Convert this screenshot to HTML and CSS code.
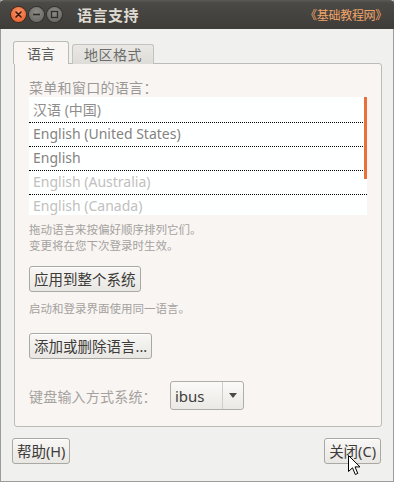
FILE: index.html
```html
<!DOCTYPE html>
<html lang="zh">
<head>
<meta charset="utf-8">
<title>语言支持</title>
<link rel="stylesheet" href="styles.css">
</head>
<body>
<div class="window">
  <div class="titlebar">
    <div class="wbtns">
      <span class="wb wb-close"><svg width="15" height="15" viewBox="0 0 15 15"><path d="M5 5 L10 10 M10 5 L5 10" stroke="#3a1a0e" stroke-width="1.6" stroke-linecap="round"/></svg></span>
      <span class="wb wb-gray"><svg width="15" height="15" viewBox="0 0 15 15"><path d="M4 7.5 H11" stroke="#2e2d2a" stroke-width="1.6"/></svg></span>
      <span class="wb wb-gray"><svg width="15" height="15" viewBox="0 0 15 15"><rect x="4.5" y="4.5" width="6" height="6" fill="none" stroke="#2e2d2a" stroke-width="1.3"/></svg></span>
    </div>
    <div class="title">语言支持</div>
    <div class="brand">《基础教程网》</div>
  </div>
  <div class="body">
    <div class="tabs">
      <div class="tab tab-active">语言</div>
      <div class="tab">地区格式</div>
    </div>
    <div class="panel">
      <div class="label">菜单和窗口的语言：</div>
      <div class="list">
        <div class="row row-mid">汉语 (中国)</div>
        <div class="row row-dark">English (United States)</div>
        <div class="row row-dark">English</div>
        <div class="row row-light">English (Australia)</div>
        <div class="row row-light row-last">English (Canada)</div>
        <div class="scroll"></div>
      </div>
      <div class="hint hint-first">拖动语言来按偏好顺序排列它们。<br>变更将在您下次登录时生效。</div>
      <div class="btnline btnline-1"><button class="btn">应用到整个系统</button></div>
      <div class="hint hint-second">启动和登录界面使用同一语言。</div>
      <div class="btnline btnline-2"><button class="btn">添加或删除语言...</button></div>
      <div class="kbd">
        <span class="kbd-label">键盘输入方式系统：</span>
        <div class="combo">
          <span class="combo-text">ibus</span>
          <span class="combo-sep"></span>
          <span class="combo-arrow"><svg width="8" height="5" viewBox="0 0 8 5"><path d="M0 0 H8 L4 5 Z" fill="#4a4a48"/></svg></span>
        </div>
      </div>
    </div>
    <div class="footer">
      <button class="btn btn-foot">帮助(H)</button>
      <button class="btn btn-foot">关闭(C)</button>
    </div>
  </div>
  <svg class="cursor" width="14" height="22" viewBox="0 0 14 22"><path d="M0.5 0.5 L0.5 16.5 L4.5 12.8 L7.3 19.5 L9.8 18.4 L7 11.9 L12 11.9 Z" fill="#ffffff" stroke="#000000" stroke-width="1" stroke-linejoin="round"/></svg>
</div>
</body>
</html>
```

FILE: styles.css
```css
* { box-sizing: border-box; }
html, body { margin: 0; padding: 0; }
body {
  width: 394px;
  height: 482px;
  overflow: hidden;
  background: #f0f0ee;
  font-family: "Noto Sans", "Noto Sans CJK SC", sans-serif;
}
.window {
  position: relative;
  width: 394px;
  height: 482px;
  background: #f0f0ee;
  border-left: 1px solid #9c9c9a;
  border-right: 1px solid #9c9c9a;
  border-bottom: 1px solid #9c9c9a;
  display: flex;
  flex-direction: column;
}
.titlebar {
  height: 29px;
  flex: none;
  background: linear-gradient(#5b5a55 0px, #4a4945 3px, #3d3c38 100%);
  border-radius: 4px 4px 0 0;
  display: flex;
  align-items: center;
  padding-left: 11px;
  padding-right: 7px;
  margin-left: -1px;
  margin-right: -1px;
}
.wbtns { display: flex; gap: 3px; }
.wb {
  width: 15px;
  height: 15px;
  border-radius: 50%;
  display: flex;
}
.wb-close {
  background: radial-gradient(circle at 50% 35%, #f79466, #ef6f3f 60%, #d85a2c);
  box-shadow: 0 0 0 1px #4a2a1a;
}
.wb-gray {
  background: radial-gradient(circle at 50% 35%, #8d8c86, #6e6d68 70%);
  box-shadow: 0 0 0 1px #33322f;
}
.title {
  margin-left: 15px;
  color: #dfdbd2;
  font-weight: bold;
  font-size: 15px;
  letter-spacing: 0.5px;
  font-family: "Noto Sans CJK SC", sans-serif;
}
.brand {
  margin-left: auto;
  color: #f2a468;
  font-size: 12px;
  letter-spacing: -0.3px;
  font-family: "Noto Sans CJK SC", sans-serif;
}
.body {
  flex: 1;
  padding: 13px 12px 0 12px;
  display: flex;
  flex-direction: column;
}
.tabs {
  display: flex;
  align-items: flex-end;
  gap: 3px;
  height: 22px;
  margin-bottom: -1px;
  position: relative;
  z-index: 1;
}
.tab {
  font-family: "Noto Sans CJK SC", sans-serif;
  font-size: 14px;
  color: #6c6c6a;
  letter-spacing: 0.5px;
  height: 20px;
  line-height: 19px;
  padding: 0 11px 0 11px;
  border: 1px solid #c4c2bf;
  border-bottom: none;
  border-radius: 3px 3px 0 0;
  background: linear-gradient(#e9e8e5, #dedcd8);
}
.tab-active {
  height: 23px;
  line-height: 22px;
  background: #f9f5f2;
  color: #5c5c5a;
  border-color: #bdbbb8;
  letter-spacing: 0;
  padding: 0 13px 0 13px;
}
.panel {
  margin-left: 1px;
  width: 368px;
  height: 364px;
  flex: none;
  background: #f9f5f2;
  border: 1px solid #bdbbb8;
  border-radius: 0 3px 3px 3px;
  padding: 14px 14px 0 14px;
  display: flex;
  flex-direction: column;
  align-items: flex-start;
}
.label {
  font-family: "Noto Sans CJK SC", sans-serif;
  font-size: 14px;
  line-height: 19px;
  color: #9a9896;
  letter-spacing: 0.3px;
}
.list {
  position: relative;
  width: 338px;
  height: 118px;
  background: #feffff;
  overflow: hidden;
  padding-top: 2px;
  flex: none;
}
.row {
  height: 24px;
  line-height: 22px;
  padding-left: 4px;
  font-size: 14px;
  border-bottom: 1px dotted #000;
  font-family: "Noto Sans", "Noto Sans CJK SC", sans-serif;
}
.row-mid { color: #8f8d8b; }
.row-dark { color: #858381; }
.row-light { color: #c2c0be; }
.row-last { border-bottom: none; }
.scroll {
  position: absolute;
  right: 0;
  top: 0;
  width: 3px;
  height: 82px;
  background: #ea6f3d;
}
.hint {
  font-family: "Noto Sans CJK SC", sans-serif;
  font-size: 11.5px;
  line-height: 16px;
  color: #a4a2a0;
}
.hint-first { margin-top: 6px; }
.hint-second { margin-top: 8px; }
.btnline { display: flex; }
.btnline-1 { margin-top: 13px; }
.btnline-2 { margin-top: 17px; }
.btn {
  font-family: "Noto Sans", "Noto Sans CJK SC", sans-serif;
  font-size: 14.5px;
  color: #3c3b39;
  height: 26px;
  padding: 0 4px;
  line-height: 24px;
  border: 1px solid #aaa8a3;
  border-radius: 3px;
  background: linear-gradient(#f8f7f5, #e9e7e3);
  box-shadow: inset 0 1px 0 #ffffff;
  margin: 0;
}
.kbd {
  margin-top: 22px;
  display: flex;
  align-items: center;
  width: 100%;
}
.kbd-label {
  font-family: "Noto Sans CJK SC", sans-serif;
  font-size: 14px;
  color: #a4a2a0;
  letter-spacing: 0.2px;
  width: 141px;
}
.combo {
  width: 74px;
  height: 29px;
  border: 1px solid #b0aea9;
  border-radius: 3px;
  background: linear-gradient(#fbfaf8, #ebe9e5);
  display: flex;
  align-items: center;
}
.combo-text {
  font-family: "Noto Sans", sans-serif;
  font-size: 15px;
  color: #3e3d3b;
  padding-left: 4px;
  width: 51px;
}
.combo-sep {
  width: 1px;
  height: 27px;
  background: #d0cecb;
}
.combo-arrow {
  flex: 1;
  display: flex;
  justify-content: center;
  align-items: center;
}
.footer {
  margin-top: 11px;
  margin-left: -1px;
  display: flex;
  justify-content: space-between;
}
.btn-foot {
  height: 26px;
  padding: 0 4px;
  font-size: 14.5px;
}
.cursor {
  position: absolute;
  left: 347px;
  top: 455px;
}
```
